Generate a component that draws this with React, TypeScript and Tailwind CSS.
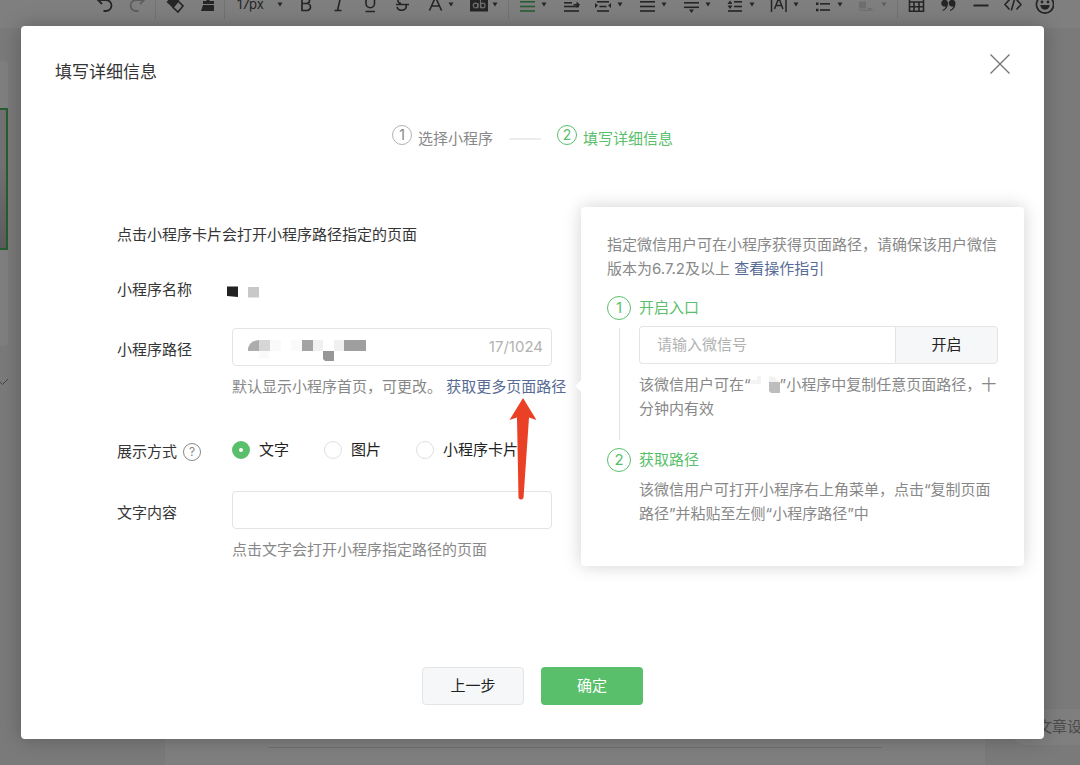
import { useState } from "react";
import type { ReactNode } from "react";

type Tool = {
  name: string;
  icon?: ReactNode;
  caret?: boolean;
  muted?: boolean;
  active?: boolean;
};

const bars = (rows: number[][]) =>
  rows.map(([x, y, w], i) => (
    <rect key={i} x={x} y={y} width={w} height="1.6" fill="currentColor" />
  ));

const TOOL_GROUPS: Tool[][] = [
  [
    {
      name: "撤销",
      icon: <path d="M4 5h7a5.500 5.500 0 0 1 0 11H8.500M7 1L3 5l4 4" fill="none" stroke="currentColor" strokeWidth="1.800" />,
    },
    {
      name: "重做",
      muted: true,
      icon: <path d="M16 5H9a5.500 5.500 0 0 0 0 11h2.500M13 1l4 4-4 4" fill="none" stroke="currentColor" strokeWidth="1.800" />,
    },
  ],
  [
    {
      name: "清除格式",
      icon: (
        <>
          <path d="M2.500 7L9 0l6.500 6L9 13z" fill="currentColor" />
          <path d="M9 12.300L14 6l5 5-5 6z" fill="none" stroke="currentColor" strokeWidth="1.600" />
        </>
      ),
    },
    {
      name: "格式刷",
      icon: <path d="M10.500 0h3v6H18v3H7V6h3.500zM7 10h11v6H5z" fill="currentColor" />,
    },
  ],
  [
    { name: "字号", caret: true },
    {
      name: "加粗",
      icon: <path d="M6 2.500v13h5a3.500 3.500 0 0 0 0-7H6h4.500a3 3 0 0 0 0-6z" fill="none" stroke="currentColor" strokeWidth="1.700" />,
    },
    {
      name: "斜体",
      icon: <path d="M8.500 2.500h7M6.500 15.500h7M12.500 2.500l-3 13" fill="none" stroke="currentColor" strokeWidth="1.600" />,
    },
    {
      name: "下划线",
      icon: <path d="M6 1v7.500a4.200 4.200 0 0 0 8.500 0V1M5.500 16.500H15" fill="none" stroke="currentColor" strokeWidth="1.600" />,
    },
    {
      name: "删除线",
      icon: <path d="M14 5c-1-4-9-3-8 1 0 1 1 2 3 2.500M4 9.500h13M14 10c2 5.500-8 7.500-9 2" fill="none" stroke="currentColor" strokeWidth="1.600" />,
    },
    {
      name: "文字颜色",
      caret: true,
      icon: <path d="M5.500 15.500L11.500 2l6 13.500M7.500 11h8" fill="none" stroke="currentColor" strokeWidth="1.600" />,
    },
    {
      name: "背景色",
      caret: true,
      icon: (
        <>
          <rect x="2" y="3" width="18" height="13.500" fill="currentColor" />
          <circle cx="7.500" cy="10.500" r="2.300" fill="none" stroke="#ddd" strokeWidth="1.200" />
          <path d="M10 8v5.300M12.500 4.500v8.800" stroke="#ddd" strokeWidth="1.200" />
          <circle cx="14.800" cy="10.500" r="2.300" fill="none" stroke="#ddd" strokeWidth="1.200" />
        </>
      ),
    },
  ],
  [
    { name: "左对齐", caret: true, active: true, icon: bars([[3, 6, 15], [3, 10.7, 15], [3, 15.2, 15]]) },
    {
      name: "首行缩进",
      icon: (
        <>
          {bars([[3, 7, 8], [3, 10.7, 15], [3, 15.2, 15]])}
          <path d="M12.500 9h3V6.500L19 9.800 15.500 13v-2.400h-3z" fill="currentColor" />
        </>
      ),
    },
    {
      name: "两端缩进",
      caret: true,
      icon: (
        <>
          {bars([[4, 6, 12], [6.5, 10.7, 7], [4, 15.2, 12]])}
          <path d="M2 8l3 2.500L2 13zM18 8l-3 2.500 3 2.500z" fill="currentColor" />
        </>
      ),
    },
    { name: "行间距", caret: true, icon: bars([[3, 6, 15], [3, 10.7, 15], [3, 15.2, 15]]) },
    {
      name: "段后距",
      caret: true,
      icon: (
        <>
          {bars([[3, 7, 15], [3, 11.5, 15]])}
          <path d="M8 14.500h5l-2.500 3.500z" fill="currentColor" />
        </>
      ),
    },
    {
      name: "段前距",
      caret: true,
      icon: (
        <>
          {bars([[9, 6, 8], [9, 10.7, 8], [3, 15.2, 14]])}
          <path d="M2.500 9L5 5.500 7.500 9zM2.500 10.500h5L5 14z" fill="currentColor" />
        </>
      ),
    },
    {
      name: "字间距",
      caret: true,
      icon: <path d="M2.500 3v14M17 3v14M5.500 14L9.800 3l4.200 11M7 10.500h6" fill="none" stroke="currentColor" strokeWidth="1.500" />,
    },
    {
      name: "列表",
      caret: true,
      icon: (
        <>
          {bars([[7, 8, 10], [7, 14.2, 10]])}
          <path d="M3 7.500h2.500V10H3zM3 13.700h2.500v2.500H3z" fill="currentColor" />
        </>
      ),
    },
    {
      name: "图文混排",
      caret: true,
      muted: true,
      icon: <path d="M2 6.500h7v7H2zM11 13h4v1.200h-4zM2 14.800h14v1H2z" fill="currentColor" opacity="0.500" />,
    },
  ],
  [
    {
      name: "表格",
      icon: <path d="M3.500 2h14v14.300h-14zM3.500 7h14M3.500 11.700h14M8 7v9.500M13 7v9.500" fill="none" stroke="currentColor" strokeWidth="1.600" />,
    },
    {
      name: "引用",
      icon: <path d="M4.500 15c2-1 3-2 3.200-3.600A3.400 3.400 0 1 1 10 8c0 4-2 7-5.500 8zM12 15c2-1 3-2 3.200-3.600A3.400 3.400 0 1 1 17.500 8c0 4-2 7-5.500 8z" fill="currentColor" />,
    },
    { name: "分隔线", icon: <rect x="3.500" y="9.500" width="15" height="2" fill="currentColor" /> },
    {
      name: "代码",
      icon: <path d="M7.500 4.500l-4.500 5 4.500 5M14.500 4.500l4.500 5-4.500 5M12.800 3.500l-3.500 12" fill="none" stroke="currentColor" strokeWidth="1.600" />,
    },
    {
      name: "表情",
      icon: (
        <>
          <circle cx="11" cy="9.500" r="8.600" fill="none" stroke="currentColor" strokeWidth="1.700" />
          <circle cx="8" cy="7" r="1.400" fill="currentColor" />
          <circle cx="14" cy="7" r="1.400" fill="currentColor" />
          <path d="M6.300 10h9.400a4.700 4.700 0 0 1-9.400 0z" fill="currentColor" />
        </>
      ),
    },
  ],
];

const Caret = () => (
  <svg viewBox="0 0 6 6" className="size-1.5 shrink-0">
    <path d="M.5.500h5L3 4.500z" fill="currentColor" />
  </svg>
);

const toolColor = (tool: Tool) => {
  if (tool.active) return "text-[#4ebb62]";
  if (tool.muted) return "text-[#bbb]";
  return "text-[#4a4a4a]";
};

const ToolButton = ({ tool }: { tool: Tool }) => {
  if (!tool.icon) {
    return (
      <button type="button" className="flex h-6 w-[63px] shrink-0 items-center justify-between pr-[7px] pl-2.5 text-[13px] text-[#4a4a4a]">
        17px
        <Caret />
      </button>
    );
  }
  return (
    <button
      type="button"
      aria-label={tool.name}
      className={`flex h-6 shrink-0 items-center gap-1 pl-1.5 ${tool.caret ? "w-11" : "w-8"} ${toolColor(tool)}`}
    >
      <svg viewBox="0 0 20 20" className="size-5 shrink-0">
        {tool.icon}
      </svg>
      {tool.caret && (
        <span className={tool.muted ? "text-[#bbb]" : "text-[#4a4a4a]"}>
          <Caret />
        </span>
      )}
    </button>
  );
};

const EditorPage = () => (
  <div aria-hidden="true" className="absolute inset-0 flex flex-col overflow-hidden bg-[#f4f4f4]">
    <div className="h-7 shrink-0 overflow-hidden bg-white">
      <div className="-mt-[9px] flex pl-[89px]">
        {TOOL_GROUPS.map((group, i) => (
          <div key={i} className="flex shrink-0 items-center">
            {i > 0 && <span className="mx-0.5 h-7 w-px bg-[#e4e4e4]" />}
            {group.map((tool) => (
              <ToolButton key={tool.name} tool={tool} />
            ))}
          </div>
        ))}
      </div>
    </div>
    <div className="flex grow">
      <div className="w-2 shrink-0 pt-[33px]">
        <div className="h-[285px] rounded-r bg-white pt-[47px]">
          <div className="h-[142px] border-2 border-l-0 border-[#4ebb62] bg-linear-to-b from-[#e4e4e4] from-40% to-[#b8b8b8]" />
        </div>
        <svg viewBox="0 0 8 8" className="mt-8 size-2">
          <path d="M0 4l2.500 2.500L8 1" fill="none" stroke="#888" />
        </svg>
      </div>
      <div className="ml-[157px] flex grow flex-col justify-end bg-white px-[103px] pb-[17px]">
        <hr className="border-[#e0e0e0]" />
      </div>
      <div className="flex w-[95px] shrink-0 items-end overflow-hidden pb-5 pl-6">
        <div className="rounded-full bg-white py-1.5 pr-5 pl-7 text-[15px] leading-6 whitespace-nowrap text-[#999]">文章设置</div>
      </div>
    </div>
  </div>
);

const StepNumber = ({ children }: { children: ReactNode }) => (
  <span className="flex size-6 shrink-0 items-center justify-center rounded-full border border-[#5abf6b] text-[15px] text-[#5abf6b]">
    {children}
  </span>
);

const Popover = () => (
  <aside className="relative w-[443px] shrink-0 rounded bg-white px-[26px] pt-[26px] pb-10 leading-6 text-[#888] shadow-[0_0_18px_rgba(0,0,0,0.18)]">
    <span className="absolute top-[175px] -left-1 size-2 rotate-45 bg-white" />
    <p>
      指定微信用户可在小程序获得页面路径，请确保该用户微信版本为6.7.2及以上{" "}
      <a href="#guide" className="text-[#576b95]">
        查看操作指引
      </a>
    </p>
    <div className="mt-[15px] flex gap-2">
      <div className="flex flex-col items-center gap-2 pb-2">
        <StepNumber>1</StepNumber>
        <span className="w-px grow bg-[#e4e4e4]" />
      </div>
      <div className="grow pb-[27px]">
        <h3 className="text-[#5abf6b]">
          <label htmlFor="wechat-id">开启入口</label>
        </h3>
        <div className="mt-1.5 flex h-[38px]">
          <input
            id="wechat-id"
            type="text"
            placeholder="请输入微信号"
            className="w-0 grow rounded-l border border-r-0 border-[#e4e4e4] px-[17px] outline-none placeholder:text-[#b2b2b2]"
          />
          <button type="button" className="w-[103px] rounded-r border border-[#e4e4e4] bg-[#f6f7f9] text-[#222]">
            开启
          </button>
        </div>
        <p className="mt-[9px]">
          该微信用户可在“
          <svg viewBox="0 0 29 20" className="inline h-5 w-[29px]">
            <path d="M0 4h6V0h4v8H0z" fill="#f4f4f4" />
            <path d="M18 0q9 1 10 7H18z" fill="#f2f2f2" />
            <path d="M18 6h11v11H20l-2-2z" fill="#bdbdbd" />
          </svg>
          ”小程序中复制任意页面路径，十分钟内有效
        </p>
      </div>
    </div>
    <div className="flex gap-2">
      <StepNumber>2</StepNumber>
      <div className="grow">
        <h3 className="text-[#5abf6b]">获取路径</h3>
        <p className="mt-1.5">该微信用户可打开小程序右上角菜单，点击“复制页面路径”并粘贴至左侧“小程序路径”中</p>
      </div>
    </div>
  </aside>
);

const DISPLAY_TYPES = ["文字", "图片", "小程序卡片"];

const DetailForm = () => {
  const [displayType, setDisplayType] = useState("文字");

  return (
    <form className="relative w-0 grow pt-4 whitespace-nowrap text-[#353535]">
      <p className="leading-6">点击小程序卡片会打开小程序路径指定的页面</p>

      <div className="mt-[31px] flex h-6 items-center">
        <span className="w-[115px] shrink-0">小程序名称</span>
        <svg viewBox="0 0 28 12" className="h-3 w-7 overflow-visible" role="img" aria-label="小程序名称">
          <path d="M-5 2.500H6V13l-11-1z" fill="#222" />
          <path d="M16 3h11v10.500H16z" fill="#c8c8c8" />
        </svg>
      </div>

      <div className="mt-[26px] flex">
        <label htmlFor="path" className="w-[115px] shrink-0 leading-[44px]">
          小程序路径
        </label>
        <div>
          <div className="flex h-[38px] w-80 items-center rounded border border-[#e4e4e4] pr-2 pl-[15px]">
            <svg viewBox="0 -9 118 32" className="h-8 w-[118px]">
              <path d="M0 11V8q2-7 11-8v11z" fill="#adadad" />
              <path d="M11 0h11v11H11z" fill="#d6d6d6" />
              <path d="M22 0h11v11H22zM43 0h11v11H43zM11 11h10v8H11z" fill="#fafafa" />
              <path d="M54 0h11v11H54z" fill="#a3a3a3" />
              <path d="M65 0h10v11H65zM86 0h10v11H86z" fill="#f0f0f0" />
              <path d="M75 11h11v10h-9l-2-2z" fill="#979797" />
              <path d="M96 0h22v11H96z" fill="#9f9f9f" />
            </svg>
            <input id="path" type="text" className="w-0 grow outline-none" />
            <span className="text-[#b2b2b2]">17/1024</span>
          </div>
          <p className="mt-[9px] leading-6 text-[#888]">
            默认显示小程序首页，可更改。{" "}
            <a href="#more" className="text-[#576b95]">
              获取更多页面路径
            </a>
          </p>
        </div>
      </div>

      <div role="radiogroup" aria-labelledby="display-label" className="mt-[39px] flex h-6">
        <div className="flex w-[115px] shrink-0 items-center gap-1.5 pt-1">
          <span id="display-label">展示方式</span>
          <button type="button" aria-label="说明" className="flex size-[18px] items-center justify-center rounded-full border border-[#888] text-xs text-[#888]">
            ?
          </button>
        </div>
        <div className="flex gap-[35px] text-[#222]">
          {DISPLAY_TYPES.map((type) => (
            <label key={type} className="flex items-center gap-[9px]">
              <input
                type="radio"
                name="display"
                checked={displayType === type}
                onChange={() => setDisplayType(type)}
                className="size-[18px] appearance-none rounded-full border border-[#e0e0e0] bg-white checked:border-[7px] checked:border-[#5abf6b]"
              />
              {type}
            </label>
          ))}
        </div>
      </div>

      <div className="mt-[29px] flex">
        <label htmlFor="content" className="w-[115px] shrink-0 leading-[44px]">
          文字内容
        </label>
        <div>
          <input id="content" type="text" className="block h-[38px] w-80 rounded border border-[#e4e4e4] px-4 outline-none" />
          <p className="mt-[9px] leading-6 text-[#888]">点击文字会打开小程序指定路径的页面</p>
        </div>
      </div>

      <svg viewBox="0 0 28 102" className="absolute top-[191px] left-[392px] h-[102px] w-7">
        <path d="M14 0l13.500 22-7.500-2.500L14.500 100q-2.500 3-5 0L8 19.500.5 22z" fill="#ea4025" />
      </svg>
    </form>
  );
};

const App = () => {
  return (
    <div className="relative font-['Inter','Noto_Sans_CJK_SC',sans-serif] text-[15px]">
      <EditorPage />
      <div className="relative min-h-screen bg-black/50 pt-[26px] pr-9 pb-[26px] pl-[21px]">
        <div role="dialog" aria-labelledby="dialog-title" className="rounded bg-white pt-7 pb-[34px] shadow-[0_0_20px_rgba(0,0,0,0.25)]">
          <header className="flex items-start justify-between px-[34px]">
            <h2 id="dialog-title" className="text-[17px] leading-9 text-[#353535]">
              填写详细信息
            </h2>
            <button type="button" aria-label="关闭">
              <svg viewBox="0 0 20 20" className="size-5">
                <path d="M.5.500l19 19M19.500.500l-19 19" fill="none" stroke="#777" strokeWidth="1.400" />
              </svg>
            </button>
          </header>

          <ol className="mt-[35px] flex justify-center leading-7">
            <li className="flex gap-1.5 text-[#888]">
              <span className="flex size-5 items-center justify-center rounded-full border border-[#b2b2b2] text-sm">1</span>
              选择小程序
            </li>
            <li aria-hidden="true" className="mx-4 w-8 self-center border-t-2 border-[#ededed]" />
            <li className="flex gap-1.5 text-[#5abf6b]">
              <span className="flex size-5 items-center justify-center rounded-full border border-[#5abf6b] text-sm">2</span>
              填写详细信息
            </li>
          </ol>

          <div className="mt-[54px] flex pr-5 pl-24">
            <DetailForm />
            <Popover />
          </div>

          <footer className="mt-[101px] flex justify-center gap-[17px]">
            <button type="button" className="h-[38px] w-[102px] rounded border border-[#e4e4e4] bg-[#f6f7f9] text-[#222]">
              上一步
            </button>
            <button type="button" className="h-[38px] w-[102px] rounded bg-[#5abf6b] text-white">
              确定
            </button>
          </footer>
        </div>
      </div>
    </div>
  );
};

export default App;
